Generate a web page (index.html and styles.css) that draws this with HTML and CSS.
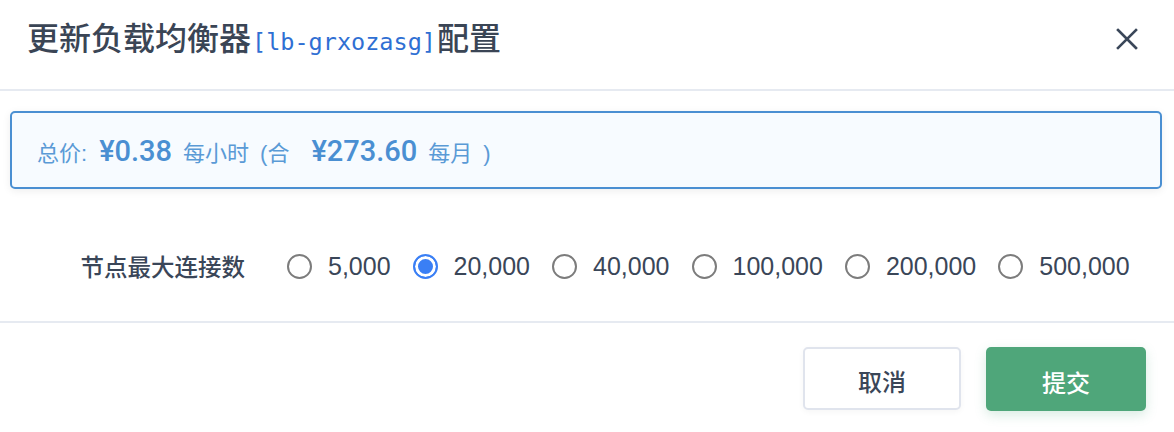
FILE: index.html
```html
<!DOCTYPE html>
<html lang="zh-CN">
<head>
<meta charset="utf-8">
<title>更新负载均衡器配置</title>
<link rel="stylesheet" href="styles.css">
</head>
<body>
<div class="dialog">
  <header class="dlg-head">
    <h1 class="title">更新负载均衡器<code class="lb-id">[lb-grxozasg]</code>配置</h1>
    <button class="close" aria-label="关闭">
      <svg width="22" height="22" viewBox="0 0 22 22"><path d="M2 2 L20 20 M20 2 L2 20" stroke="#3a4759" stroke-width="2.6" stroke-linecap="square" fill="none"/></svg>
    </button>
  </header>
  <div class="dlg-body">
    <div class="price-alert">
      <span class="p-label">总价:</span>
      <span class="p-num">¥0.38</span>
      <span class="p-unit">每小时</span>
      <span class="p-paren">(合</span>
      <span class="p-num p-num-2">¥273.60</span>
      <span class="p-unit">每月</span>
      <span class="p-paren">)</span>
    </div>
    <div class="form-row">
      <label class="form-label">节点最大连接数</label>
      <div class="radio-group">
        <label class="radio-item"><span class="radio"></span><span class="radio-text">5,000</span></label>
        <label class="radio-item"><span class="radio checked"></span><span class="radio-text">20,000</span></label>
        <label class="radio-item"><span class="radio"></span><span class="radio-text">40,000</span></label>
        <label class="radio-item"><span class="radio"></span><span class="radio-text">100,000</span></label>
        <label class="radio-item"><span class="radio"></span><span class="radio-text">200,000</span></label>
        <label class="radio-item"><span class="radio"></span><span class="radio-text">500,000</span></label>
      </div>
    </div>
  </div>
  <footer class="dlg-foot">
    <button class="btn btn-cancel">取消</button>
    <button class="btn btn-submit">提交</button>
  </footer>
</div>
</body>
</html>
```

FILE: styles.css
```css
* { box-sizing: border-box; }
html, body { margin: 0; padding: 0; background: #fff; }
body {
  font-family: "Liberation Sans", "Noto Sans CJK SC", sans-serif;
  color: #3a4658;
}
.dialog { width: 1174px; height: 432px; background: #fff; }

.dlg-head {
  height: 91px;
  padding: 0 36px 2px 27px;
  display: flex;
  align-items: center;
  justify-content: space-between;
  border-bottom: 2px solid #e6eaf1;
}
.title {
  margin: 0;
  font-family: "Noto Sans CJK SC", sans-serif;
  font-size: 32px;
  font-weight: 500;
  color: #3a4555;
  line-height: 1;
  display: flex;
  align-items: baseline;
  margin-top: -13px;
}
.lb-id {
  font-family: "DejaVu Sans Mono", monospace;
  font-size: 23.5px;
  font-weight: 400;
  color: #2f6fd3;
  margin: 0 1px;
}
.close {
  border: 0;
  background: none;
  padding: 0;
  width: 22px;
  height: 22px;
  margin-top: -9px;
  display: flex;
}

.dlg-body { padding: 20px 12px 40px 10px; }

.price-alert {
  height: 78px;
  border: 2px solid #4a8fd2;
  border-radius: 5px;
  background: #f7fbff;
  box-shadow: 0 2px 8px rgba(0, 0, 0, 0.07);
  padding: 2px 0 0 25px;
  display: flex;
  align-items: baseline;
  align-content: center;
  flex-wrap: wrap;
  color: #4a8fd2;
}
.p-label, .p-unit, .p-paren {
  font-family: "Liberation Sans", "Noto Sans CJK SC", sans-serif;
  font-size: 22px;
  color: #5a9ad6;
}
.p-num {
  font-family: "Roboto", "Liberation Sans", sans-serif;
  font-size: 29px;
  font-weight: 500;
  color: #4a8fd2;
  margin: 0 11px 0 12px;
}
.p-unit { margin-right: 11px; }
.p-num-2 { margin-left: 22px; }

.form-row {
  margin-top: 62px;
  height: 30px;
  display: flex;
  align-items: center;
}
.form-label {
  width: 235px;
  text-align: right;
  font-family: "Noto Sans CJK SC", sans-serif;
  font-size: 23.5px;
  font-weight: 500;
  color: #3a4658;
  margin-right: 42px;
}
.radio-group { display: flex; align-items: center; }
.radio-item {
  display: flex;
  align-items: center;
  margin-right: 22px;
}
.radio {
  width: 25px;
  height: 25px;
  border-radius: 50%;
  border: 2px solid #7c7c7c;
  background: #fff;
  margin-right: 16px;
  flex: none;
}
.radio.checked {
  border: 2.5px solid #3a7ff5;
  background: #3a7ff5;
  box-shadow: inset 0 0 0 3px #fff;
}
.radio-text {
  font-family: "Liberation Sans", sans-serif;
  font-size: 25px;
  color: #3a4658;
}

.dlg-foot {
  border-top: 2px solid #e6eaf1;
  padding: 24px 28px 0 0;
  display: flex;
  justify-content: flex-end;
  align-items: flex-start;
  gap: 25px;
}
.btn {
  font-family: "Noto Sans CJK SC", sans-serif;
  font-size: 24px;
  font-weight: 500;
  border-radius: 5px;
  cursor: pointer;
  padding: 4px 0 0;
}
.btn-cancel {
  width: 158px;
  height: 63px;
  background: #fff;
  border: 2px solid #e0e4ed;
  color: #3a4658;
  box-shadow: 0 2px 6px rgba(0, 0, 0, 0.04);
}
.btn-submit {
  width: 160px;
  height: 64px;
  background: #4fa67a;
  border: 0;
  color: #fff;
  box-shadow: 0 4px 12px rgba(79, 166, 122, 0.22);
}
```
